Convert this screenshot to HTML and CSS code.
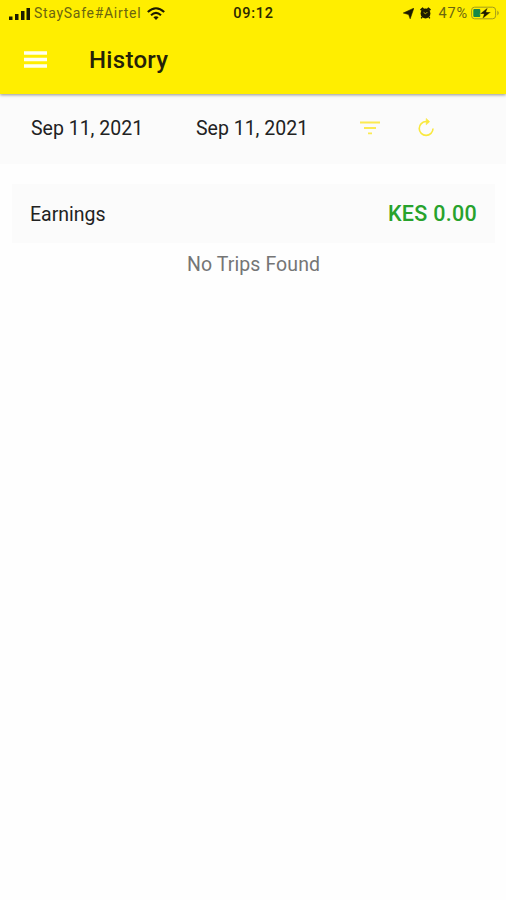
FILE: index.html
```html
<!DOCTYPE html>
<html lang="en">
<head>
<meta charset="utf-8">
<title>History</title>
<link rel="stylesheet" href="styles.css">
</head>
<body>
<header class="top">
  <div class="status">
    <div class="status-left">
      <svg class="signal" width="22" height="13" viewBox="0 0 22 13"><path d="M0 9.5h3.5V13H0zM6 7h3.5v6H6zM12 4h3.5v9H12zM17.5 1H21v12h-3.5z" fill="#1d1b00"/></svg>
      <span class="carrier">StaySafe#Airtel</span>
      <svg class="wifi" width="18" height="13" viewBox="0 0 18 13"><g fill="none" stroke="#1d1b00" stroke-width="2.1"><path d="M.8 5.1Q9-2.6 17.2 5.1"/><path d="M4 8.2q5-4.5 10 0"/></g><path d="M6.4 10.3q2.6-2.1 5.2 0L9 12.9z" fill="#1d1b00"/></svg>
    </div>
    <span class="time">09:12</span>
    <div class="status-right">
      <svg width="11" height="11" viewBox="0 0 11 11"><path d="M10.8.2 7.2 10.8 5.6 6.5.3 5z" fill="#1d1b00" stroke="#1d1b00" stroke-width=".6"/></svg>
      <svg class="alarm" width="11" height="12" viewBox="0 0 11 12"><path d="M0 2.6 2.6.3 4 1.5 1.3 4zM11 2.6 8.4.3 7 1.5 9.7 4zM1.5 9.5l1.2 1-1 1.3-1-.8zM9.5 9.5l-1.2 1 1 1.3 1-.8z" fill="#1d1b00"/><circle cx="5.5" cy="6.5" r="4.9" fill="#1d1b00"/><path d="M3.6 5.4 5.6 6.8 7.4 5" fill="none" stroke="#e6d900" stroke-width=".8"/></svg>
      <span class="percent">47%</span>
      <svg class="battery" width="29" height="14" viewBox="0 0 29 14"><rect x=".6" y="1.2" width="24" height="11.6" rx="3" fill="none" stroke="#a29b1c"/><path d="M26.3 4.5q3 2.5 0 5z" fill="#a29b1c"/><rect x="2.3" y="3" width="7" height="8" rx="1" fill="#168848"/><path d="M16.7 1.5 8.7 8h4.2l-1.6 5L20 6h-4.7z" fill="#1d1b00" stroke="#ffee00" stroke-width=".4"/></svg>
    </div>
  </div>
  <div class="appbar">
    <svg class="menu" width="23" height="17" viewBox="0 0 23 17"><path d="M0 2h23M0 8.5h23M0 15h23" stroke="#fffff0" stroke-width="3.3"/></svg>
    <h1>History</h1>
  </div>
</header>
<section class="filters">
  <span class="date">Sep 11, 2021</span>
  <span class="date">Sep 11, 2021</span>
  <svg class="filter" width="20" height="14" viewBox="0 0 20 14"><path d="M0 1.5h20M4 7h12M8 12.4h4" stroke="#fbea52" stroke-width="1.8"/></svg>
  <svg class="reload" width="18" height="20" viewBox="0 0 18 20"><path d="M15.9 11a7.3 7.3 0 1 1-7.3-7.3h2.8" fill="none" stroke="#f9e83f" stroke-width="1.7"/><path d="M8.7.4 12.4 3.8 8.7 7.2z" fill="#f9e83f" stroke="#f9e83f" stroke-width=".6"/></svg>
</section>
<main>
  <div class="card"><span class="label">Earnings</span><strong class="amount">KES 0.00</strong></div>
  <p class="empty">No Trips Found</p>
</main>
</body>
</html>
```
FILE: styles.css
```css
* { box-sizing: border-box; }
body { margin: 0; min-height: 900px; background: #fefefe; font-family: Roboto, "Liberation Sans", sans-serif; color: #222; }
svg { display: block; flex: none; }
.top { position: relative; height: 94px; background: #ffee00; box-shadow: 0 1px 3px rgba(0,0,0,.42); }
.status { display: grid; grid-template-columns: 1fr auto 1fr; height: 26px; padding: 0 6px 0 9px; align-items: center; }
.status-left, .status-right { display: flex; align-items: center; }
.status-right { justify-content: flex-end; }
.carrier { font-size: 14px; letter-spacing: .7px; color: #6b6510; margin: 0 5px 0 3px; width: 108px; white-space: nowrap; }
.time { font-size: 14.5px; font-weight: 500; letter-spacing: .7px; color: #2b2800; margin-left: -2px; }
.alarm { margin-left: 6px; }
.percent { font-size: 14.5px; letter-spacing: .9px; color: #6b6510; margin: 0 3px 0 7px; }
.appbar { display: flex; align-items: center; height: 67px; padding-left: 24px; }
.menu { margin-right: 42px; }
h1 { margin: 0; font-size: 24px; font-weight: 500; letter-spacing: .3px; color: #242108; }
.filters { display: grid; grid-template-columns: 165px 164px 58px 1fr; align-items: center; height: 70px; padding: 0 0 2px 31px; background: #fbfbfb; }
.date, .label { font-size: 19.5px; letter-spacing: 0; white-space: nowrap; }
.reload { width: 17px; height: 19px; margin-bottom: 1px; }
main { padding: 20px 11px 0 12px; }
.card { display: flex; align-items: center; justify-content: space-between; height: 59px; padding: 1px 18px 0; background: #fbfbfb; }
.amount { font-size: 21.5px; font-weight: 500; letter-spacing: .3px; color: #27a22c; margin-bottom: 2px; }
.empty { margin: 10px 0 0; text-align: center; font-size: 19.5px; line-height: 24px; letter-spacing: .1px; color: #757575; }
```
